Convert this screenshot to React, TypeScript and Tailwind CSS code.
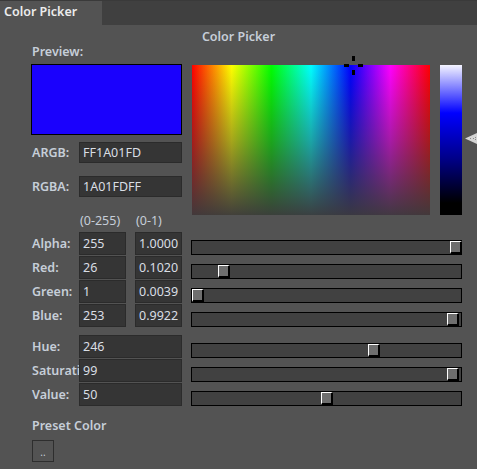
import React from "react";

const label = "text-[#c6ced8] font-semibold";

function Box({ children, className = "" }: { children?: React.ReactNode; className?: string }) {
  return (
    <div
      className={`h-[23px] bg-[#353535] border border-[#2b2b2b] pl-[3px] leading-[21px] text-[#d9dee4] whitespace-nowrap overflow-hidden ${className}`}
    >
      {children}
    </div>
  );
}

function Slider({ pos }: { pos: number }) {
  return (
    <div className="relative ml-[9px] w-[271px] h-[15px] self-end bg-[#414141] border border-black">
      <div
        className="absolute top-0 w-[12px] h-[13px] bg-[#6e6e6e] border-t border-l border-t-white border-l-white border-b-2 border-r-2 border-b-black border-r-black"
        style={{ left: pos }}
      />
    </div>
  );
}

function Row({
  name,
  a,
  b,
  pos,
}: {
  name: string;
  a: string;
  b?: string;
  pos: number;
}) {
  return (
    <div className="flex h-[23px] mb-[1px]">
      <div className={`w-[48px] pl-[1px] leading-[23px] whitespace-nowrap overflow-hidden ${label}`}>{name}</div>
      {b !== undefined ? (
        <>
          <Box className="w-[47px]">{a}</Box>
          <Box className="w-[47px] ml-[9px]">{b}</Box>
        </>
      ) : (
        <Box className="w-[103px]">{a}</Box>
      )}
      <Slider pos={pos} />
    </div>
  );
}

export default function App() {
  return (
    <div
      className="w-[477px] h-[469px] bg-[#535353] overflow-hidden text-[12.5px]"
      style={{ fontFamily: '"Noto Sans", "Open Sans", sans-serif' }}
    >
      {/* tab strip */}
      <div className="h-px bg-[#3a3a3a]" />
      <div className="flex h-[24px]">
        <div className="w-[102px] pl-[4px] leading-[22px] text-[#ececec] font-semibold">Color Picker</div>
        <div className="flex-1 bg-[#404040]" />
      </div>

      <div className="pl-[31px]">
        <div className={`-ml-[31px] mt-[4px] h-[16px] leading-[16px] text-center ${label}`}>Color Picker</div>

        {/* preview + picker area */}
        <div className="flex -mt-[1px]">
          <div className="w-[151px]">
            <div className={`h-[16px] leading-[16px] pl-[1px] mb-[4px] ${label}`}>Preview:</div>
            <div className="h-[71px] bg-[#1a01fd] border border-black" />
            <div className="flex mt-[7px] h-[21px]">
              <div className={`w-[48px] pl-[1px] leading-[21px] ${label}`}>ARGB:</div>
              <Box className="w-[103px] !h-[21px] !leading-[19px]">FF1A01FD</Box>
            </div>
            <div className="flex mt-[13px] h-[21px]">
              <div className={`w-[48px] pl-[1px] leading-[21px] ${label}`}>RGBA:</div>
              <Box className="w-[103px] !h-[21px] !leading-[19px]">1A01FDFF</Box>
            </div>
          </div>

          <div className="flex pt-[21px] ml-[10px]">
            <div className="relative w-[238px] h-[150px] bg-[image:linear-gradient(to_bottom,rgba(62,60,62,0)_0%,rgba(60,58,60,0.45)_50%,rgba(60,58,60,0.97)_100%),linear-gradient(to_right,#f00,#ff0,#0f0,#0ff,#00f,#f0f,#f00)]">
              <svg className="absolute left-[151px] top-[-10px]" width="21" height="21" viewBox="0 0 21 21">
                <rect x="9" y="1" width="3" height="5" fill="#000" />
                <rect x="9" y="15" width="3" height="5" fill="#000" />
                <rect x="1" y="9" width="5" height="3" fill="#000" />
                <rect x="15" y="9" width="5" height="3" fill="#000" />
              </svg>
            </div>
            <div className="relative ml-[10px] w-[22px] h-[150px] bg-[linear-gradient(to_bottom,#f4f4ff_0%,#0000ff_32%,#00008a_62%,#000_92%)]">
              <svg className="absolute left-[25px] top-[68px]" width="14" height="11" viewBox="0 0 14 11">
                <polygon points="0,5.5 12,0 12,11" fill="#d4d4d4" />
                <rect x="5" y="5" width="1" height="1" fill="#8a8a8a" />
                <rect x="8" y="5" width="1" height="1" fill="#8a8a8a" />
                <rect x="10" y="4" width="1" height="1" fill="#8a8a8a" />
                <rect x="10" y="6" width="1" height="1" fill="#8a8a8a" />
              </svg>
            </div>
          </div>
        </div>

        {/* RGBA channels */}
        <div className="flex -mt-[1px] h-[14px] leading-[14px] text-[#c6ced8]">
          <div className="ml-[49px] w-[56px]">(0-255)</div>
          <div>(0-1)</div>
        </div>
        <div className="mt-[4px]">
          <Row name="Alpha:" a="255" b="1.0000" pos={258} />
          <Row name="Red:" a="26" b="0.1020" pos={26} />
          <Row name="Green:" a="1" b="0.0039" pos={0} />
          <Row name="Blue:" a="253" b="0.9922" pos={255} />
        </div>

        {/* HSV */}
        <div className="mt-[8px]">
          <Row name="Hue:" a="246" pos={176} />
          <Row name="Saturation:" a="99" pos={255} />
          <Row name="Value:" a="50" pos={129} />
        </div>

        <div className={`mt-[12px] h-[16px] leading-[16px] pl-[1px] ${label}`}>Preset Color</div>
        <div className="mt-[6px] ml-[1px] w-[22px] h-[22px] border border-[#2e2e2e] flex items-center justify-center text-[#c6ced8] text-[10px] leading-none pt-[2px]">
          ..
        </div>
      </div>
    </div>
  );
}
